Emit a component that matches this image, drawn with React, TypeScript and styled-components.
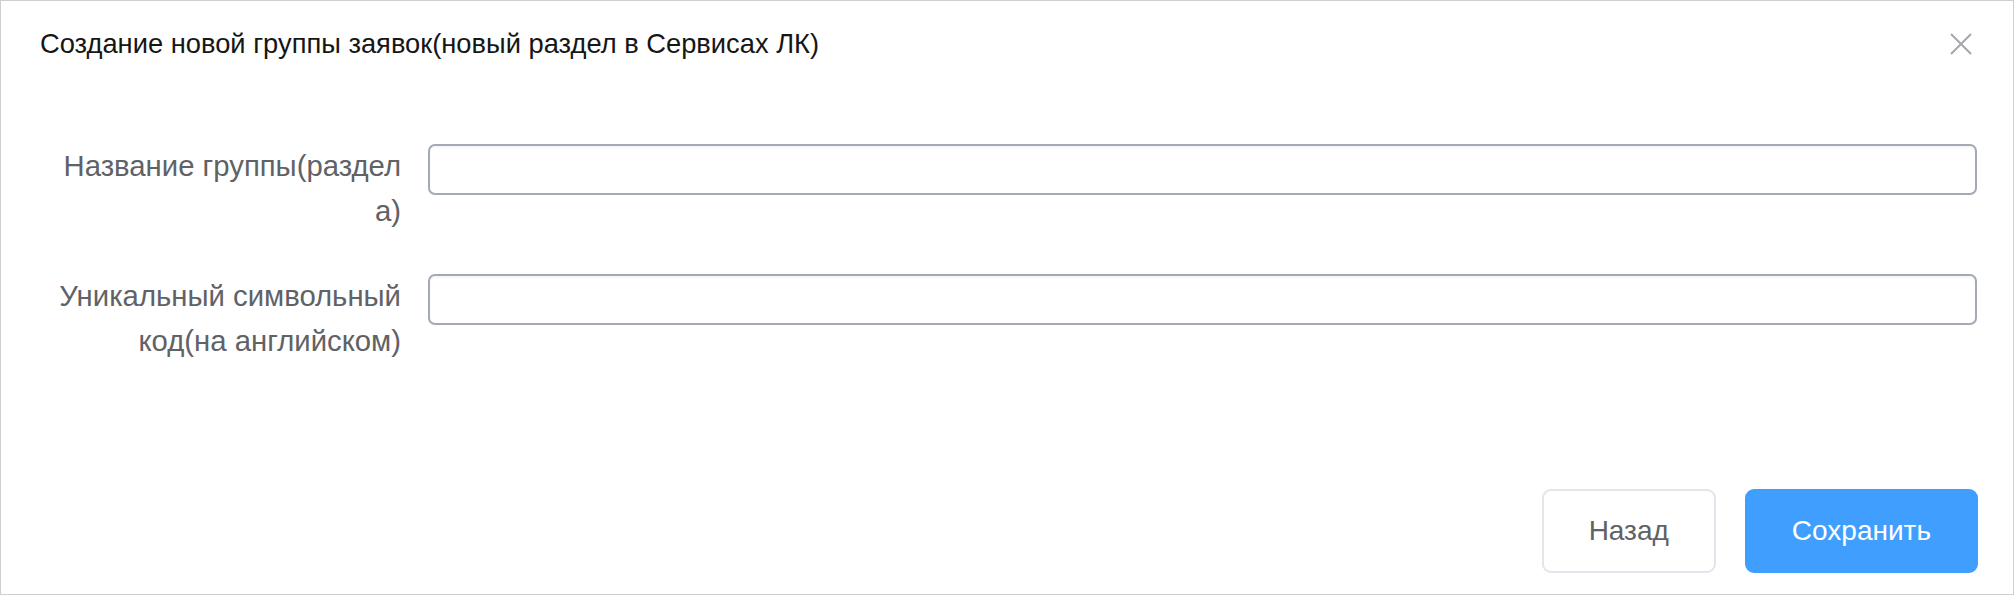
import React from "react";
import styled, {createGlobalStyle} from "styled-components";

const GlobalStyle = createGlobalStyle`
  html, body {
    margin: 0;
    padding: 0;
    background: #ffffff;
  }
  * {
    box-sizing: border-box;
  }
`;

type Field = {
  label: string[];
  name: string;
};

const fields: Field[] = [
  {label: ["Название группы(раздел", "а)"], name: "title"},
  {label: ["Уникальный символьный", "код(на английском)"], name: "code"},
];

const App = () => {
  return (
    <>
      <GlobalStyle />
      <DialogWrapper>
        <Header>
          <Title>Создание новой группы заявок(новый раздел в Сервисах ЛК)</Title>
          <CloseButton type="button" aria-label="Закрыть">
            <svg width="22" height="22" viewBox="0 0 22 22">
              <path d="M1 1 L21 21 M21 1 L1 21" stroke="#a4a7ae" strokeWidth="2" fill="none" />
            </svg>
          </CloseButton>
        </Header>
        <Form>
          {fields.map((f) => (
            <FormRow key={f.name}>
              <Label htmlFor={f.name}>
                {f.label.map((line) => (
                  <span key={line}>{line}</span>
                ))}
              </Label>
              <Input id={f.name} type="text" />
            </FormRow>
          ))}
        </Form>
        <Footer>
          <Button type="button">Назад</Button>
          <Button type="button" primary>
            Сохранить
          </Button>
        </Footer>
      </DialogWrapper>
    </>
  );
};

const DialogWrapper = styled.div`
  width: 100vw;
  height: 595px;
  border: 1px solid #cfcfcf;
  display: flex;
  flex-direction: column;
  font-family: "Liberation Sans", Arial, sans-serif;
  background: #ffffff;
`;

const Header = styled.div`
  height: 86px;
  display: flex;
  align-items: center;
  justify-content: space-between;
  padding: 0 41px 0 39px;
`;

const Title = styled.span`
  font-size: 27.3px;
  line-height: 38px;
  color: #161616;
`;

const CloseButton = styled.button`
  border: none;
  background: transparent;
  padding: 0;
  width: 22px;
  height: 22px;
  display: flex;
  cursor: pointer;
`;

const Form = styled.div`
  display: flex;
  flex-direction: column;
  gap: 41px;
  padding: 57px 36px 0 40px;
`;

const FormRow = styled.div`
  display: grid;
  grid-template-columns: 360px 1fr;
  column-gap: 27px;
  align-items: start;
`;

const Label = styled.label`
  display: flex;
  flex-direction: column;
  align-items: flex-end;
  margin-top: -1px;
  font-size: 29.3px;
  line-height: 45px;
  color: #606266;
  white-space: pre;
`;

const Input = styled.input`
  height: 51px;
  width: 100%;
  border: 2px solid #a3aab4;
  border-radius: 7px;
  background: #ffffff;
  box-shadow: inset 0 2px 2px rgba(0, 0, 0, 0.04);
  outline: none;
  font-size: 28px;
  padding: 0 16px;
`;

const Footer = styled.div`
  margin-top: auto;
  display: flex;
  justify-content: flex-end;
  gap: 29px;
  padding: 0 35px 21px 0;
`;

const Button = styled.button<{primary?: boolean}>`
  height: 84px;
  padding: 0 45px;
  border-radius: 9px;
  font-family: "Liberation Sans", Arial, sans-serif;
  font-size: 28px;
  cursor: pointer;
  border: 2px solid ${(props) => (props.primary ? "#409eff" : "#e2e5eb")};
  background: ${(props) => (props.primary ? "#409eff" : "#ffffff")};
  color: ${(props) => (props.primary ? "#ffffff" : "#606266")};
`;

export default App;
